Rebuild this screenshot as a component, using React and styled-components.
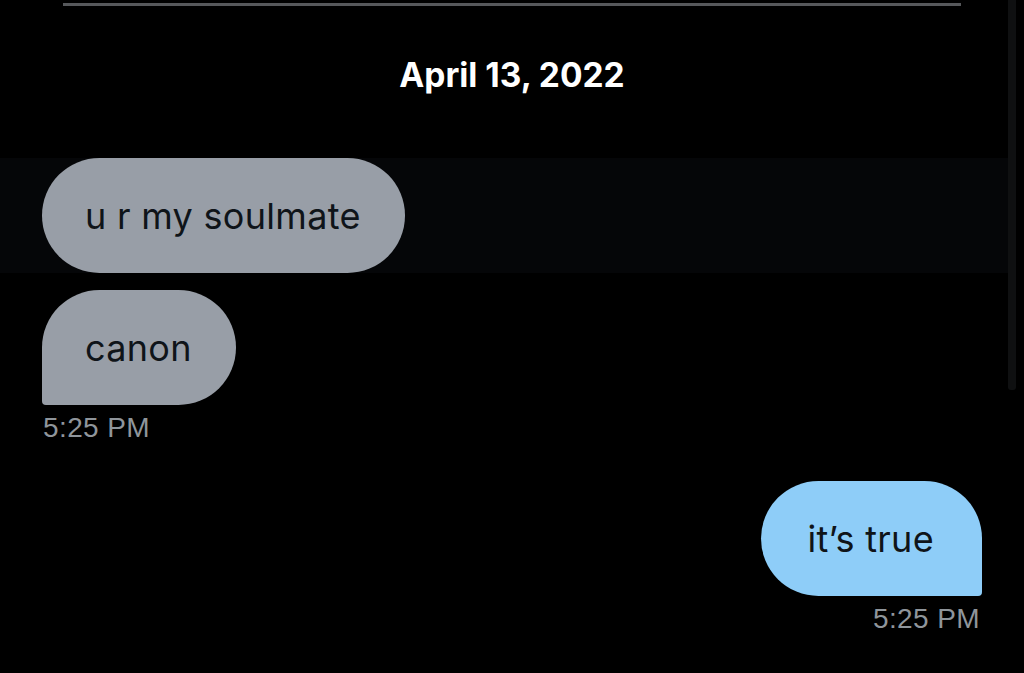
import React from "react";
import styled, { createGlobalStyle } from "styled-components";

const GlobalStyle = createGlobalStyle`
  html, body {
    margin: 0;
    padding: 0;
    background: #000;
  }
  * {
    box-sizing: border-box;
  }
`;

const Screen = styled.div`
  position: relative;
  width: 1024px;
  height: 673px;
  overflow: hidden;
  background: #000;
  font-family: Inter, "Liberation Sans", sans-serif;
  display: flex;
  flex-direction: column;
`;

const TopBar = styled.div`
  margin: 3px 0 0 63px;
  width: 898px;
  height: 3px;
  background: #56585b;
`;

const DateLabel = styled.div`
  margin-top: 49px;
  height: 40px;
  line-height: 40px;
  text-align: center;
  color: #fff;
  font-size: 33.5px;
  font-weight: 700;
`;

const Row = styled.div`
  display: flex;
  justify-content: ${(p) => (p.mine ? "flex-end" : "flex-start")};
  padding: 0 42px;
  margin-top: ${(p) => p.gap || 0}px;
  background: ${(p) => (p.hover ? "#050608" : "transparent")};
  width: ${(p) => (p.hover ? "1008px" : "auto")};
`;

const Bubble = styled.div`
  height: 115px;
  display: flex;
  align-items: center;
  padding: ${(p) => (p.mine ? "0 48px 0 46px" : "0 44px 0 43px")};
  font-size: 36px;
  letter-spacing: 0.3px;
  color: #0f1419;
  background: ${(p) => (p.mine ? "#8ecdf8" : "#989ea7")};
  border-radius: 58px;
  ${(p) => p.tail && (p.mine ? "border-bottom-right-radius: 4px;" : "border-bottom-left-radius: 4px;")}
`;

const Time = styled.div`
  margin-top: 7px;
  padding: 0 ${(p) => (p.mine ? "44px" : "0")} 0 ${(p) => (p.mine ? "0" : "43px")};
  text-align: ${(p) => (p.mine ? "right" : "left")};
  font-size: 28px;
  letter-spacing: 0.4px;
  line-height: 32px;
  color: #8f959b;
  font-family: "Liberation Sans", Arial, sans-serif;
`;

const Scrollbar = styled.div`
  position: absolute;
  top: 0;
  right: 8px;
  width: 8px;
  height: 390px;
  background: #0f1011;
  border-radius: 0 0 3px 3px;
`;

export default function App() {
  return (
    <Screen>
      <GlobalStyle />
      <TopBar />
      <DateLabel>April 13, 2022</DateLabel>
      <Row hover gap={63}>
        <Bubble>u r my soulmate</Bubble>
      </Row>
      <Row gap={17}>
        <Bubble tail>canon</Bubble>
      </Row>
      <Time>5:25 PM</Time>
      <Row mine gap={37}>
        <Bubble mine tail>it’s true</Bubble>
      </Row>
      <Time mine>5:25 PM</Time>
      <Scrollbar />
    </Screen>
  );
}
